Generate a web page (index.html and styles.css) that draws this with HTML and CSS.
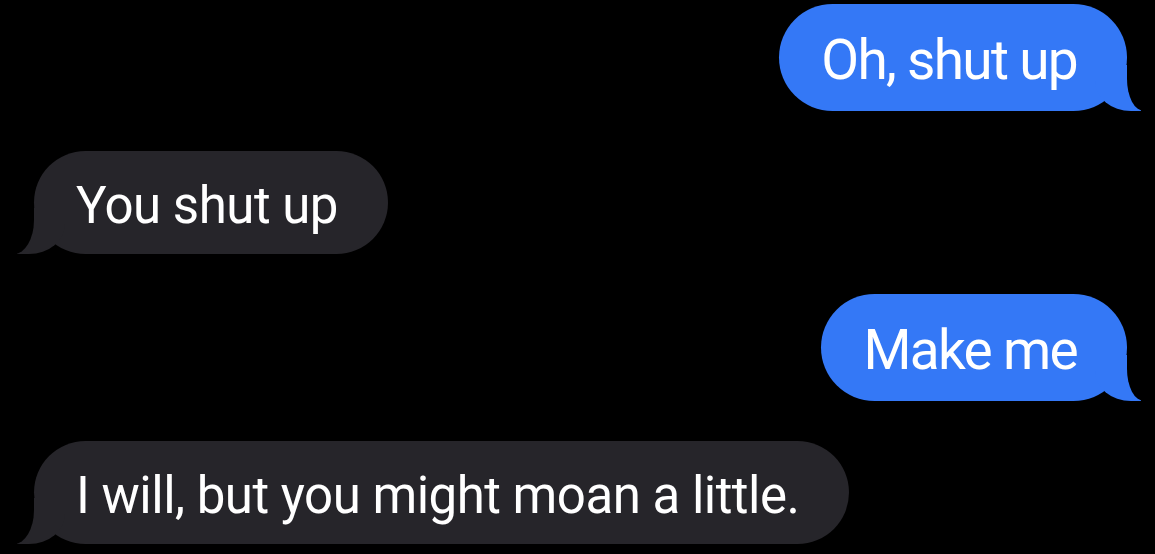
FILE: index.html
```html
<!DOCTYPE html>
<html lang="en">
<head>
<meta charset="UTF-8">
<meta name="viewport" content="width=device-width, initial-scale=1.0">
<title>Messages</title>
<link rel="stylesheet" href="styles.css">
</head>
<body>
<div class="thread">
    <div class="bubble sent">Oh, shut up</div>
    <div class="bubble received">You shut up</div>
    <div class="bubble sent">Make me</div>
    <div class="bubble received">I will, but you might moan a little.</div>
</div>
</body>
</html>
```

FILE: styles.css
```css
body {
    margin: 0;
    overflow: hidden;
    background-color: #000;
    font-family: Roboto, "Noto Sans", sans-serif;
}

.thread {
    display: flex;
    flex-direction: column;
    gap: 40px;
    padding: 4px 28px 0 34px;
}

.bubble {
    position: relative;
    color: #fff;
    border-radius: 54px;
    padding: 24px 50px 18px 42px;
    white-space: nowrap;
}

.sent {
    align-self: flex-end;
    background-color: #3478f6;
    font-size: 55px;
    line-height: 65px;
    letter-spacing: -1.7px;
}

.received {
    align-self: flex-start;
    background-color: #26252a;
    font-size: 51px;
    line-height: 61px;
    letter-spacing: -0.5px;
}

/* bubble tails */
.bubble::before,
.bubble::after {
    content: "";
    position: absolute;
    bottom: 0;
    height: 46px;
}

.sent::before {
    right: -14px;
    width: 46px;
    background-color: #3478f6;
    border-bottom-left-radius: 36px 30px;
}

.sent::after {
    right: -40px;
    width: 40px;
    background-color: #000;
    border-bottom-left-radius: 17px 32px;
}

.received::before {
    left: -17px;
    width: 48px;
    background-color: #26252a;
    border-bottom-right-radius: 36px 30px;
}

.received::after {
    left: -40px;
    width: 40px;
    background-color: #000;
    border-bottom-right-radius: 20px 34px;
}
```
